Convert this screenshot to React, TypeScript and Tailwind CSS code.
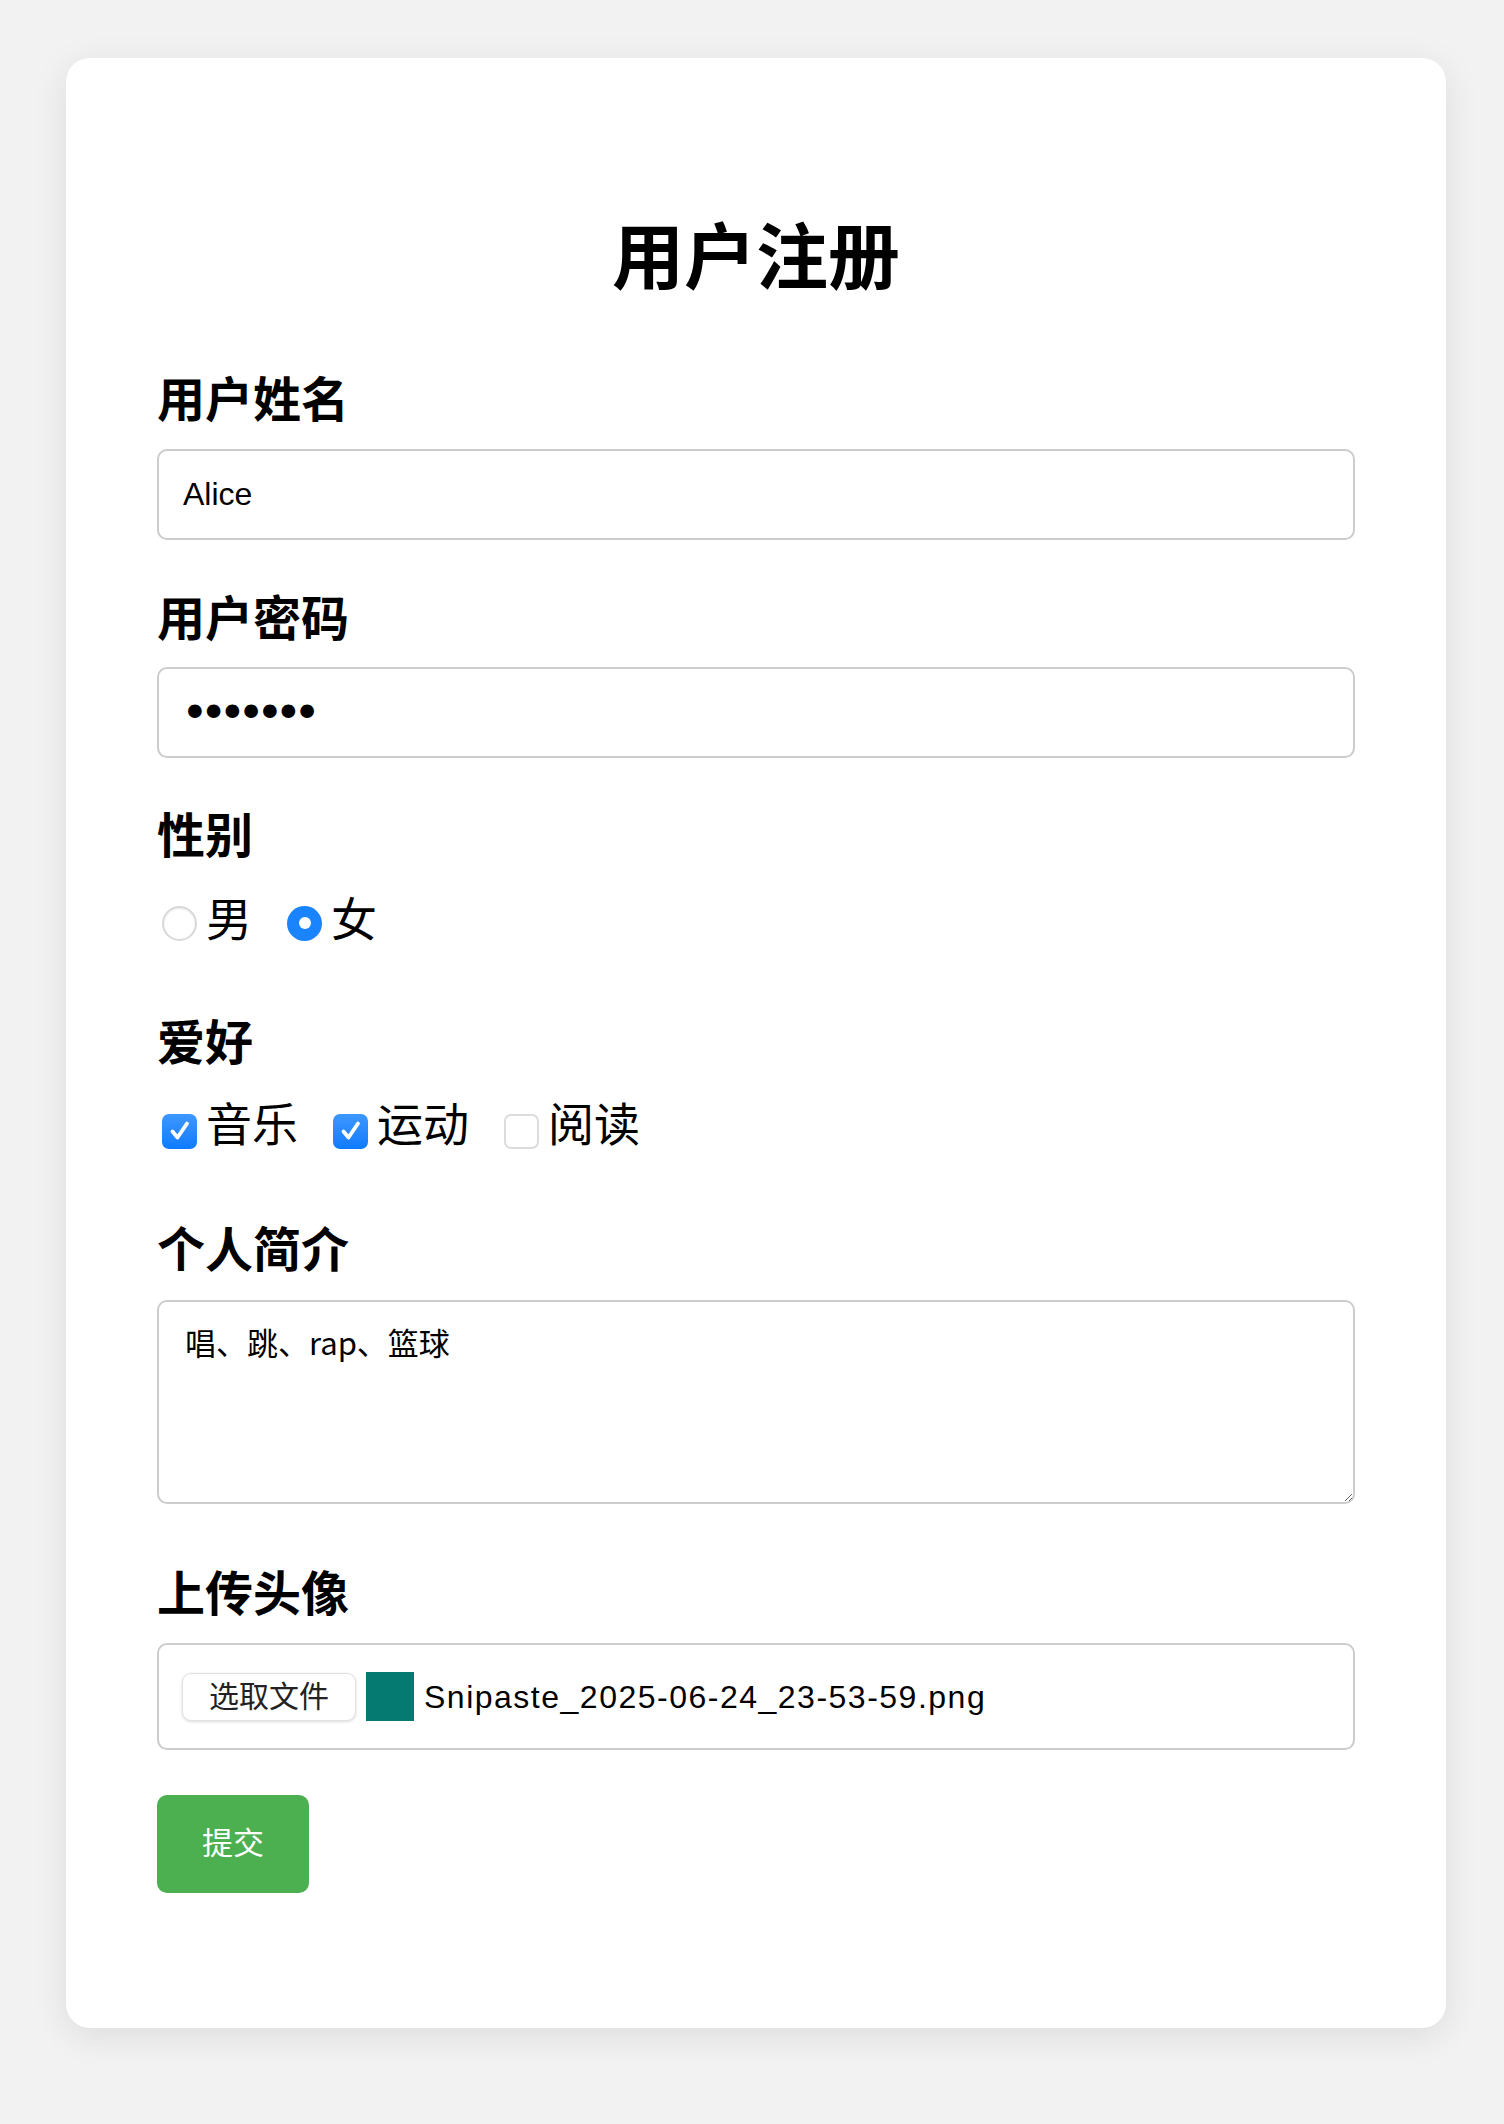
import { useState } from 'react';

const font = "font-['Liberation_Sans','Noto_Sans_CJK_SC',sans-serif]";

function Radio({ checked, label, onClick }: { checked: boolean; label: string; onClick: () => void }) {
  return (
    <label className="flex items-center cursor-pointer" onClick={onClick}>
      <span
        className={
          checked
            ? 'ml-[5px] mt-[6px] w-[35px] h-[35px] rounded-full bg-[#1a84ff] flex items-center justify-center'
            : 'ml-[5px] mt-[6px] w-[35px] h-[35px] rounded-full bg-white border-2 border-[#d9d9d9] shadow-[inset_0_1px_2px_rgba(0,0,0,0.08)]'
        }
      >
        {checked && <span className="w-[12px] h-[12px] rounded-full bg-white" />}
      </span>
      <span className="ml-[9px] text-[46px] leading-[56px] text-black">{label}</span>
    </label>
  );
}

function Check({ checked, label, onClick }: { checked: boolean; label: string; onClick: () => void }) {
  return (
    <label className="flex items-center cursor-pointer" onClick={onClick}>
      <span
        className={
          checked
            ? 'ml-[5px] mt-[12px] w-[35px] h-[35px] rounded-[7px] bg-gradient-to-b from-[#3d97ff] to-[#0a7bff] flex items-center justify-center'
            : 'ml-[5px] mt-[12px] w-[35px] h-[35px] rounded-[7px] bg-white border-2 border-[#dcdcdc]'
        }
      >
        {checked && (
          <svg width="24" height="24" viewBox="0 0 24 24" fill="none">
            <path d="M4.5 12.5 L9.5 18.5 L19 4.5" stroke="white" strokeWidth="3.8" strokeLinecap="round" strokeLinejoin="round" />
          </svg>
        )}
      </span>
      <span className="ml-[9px] text-[46px] leading-[56px] text-black">{label}</span>
    </label>
  );
}

export default function App() {
  const [gender, setGender] = useState('female');
  const [hobbies, setHobbies] = useState<string[]>(['music', 'sport']);

  const toggle = (h: string) =>
    setHobbies((prev) => (prev.includes(h) ? prev.filter((x) => x !== h) : [...prev, h]));

  return (
    <div className={`min-h-screen bg-[#f2f2f2] pt-[58px] pb-[60px] pl-[66px] pr-[58px] ${font}`}>
      <div className="bg-white rounded-[24px] shadow-[0_8px_36px_rgba(0,0,0,0.09)] px-[91px] pt-[160px] pb-[135px]">
        <h1 className="text-center text-[72px] leading-[80px] font-bold text-black">用户注册</h1>

        <div className="mt-[75px] text-[48px] leading-[56px] font-bold text-black">用户姓名</div>
        <input
          type="text"
          defaultValue="Alice"
          className="mt-[20px] block w-full h-[91px] border-2 border-[#cccccc] rounded-[10px] px-[24px] text-[32px] text-black outline-none"
        />

        <div className="mt-[52px] text-[48px] leading-[56px] font-bold text-black">用户密码</div>
        <input
          type="password"
          defaultValue="1234567"
          className="mt-[19px] block w-full h-[91px] border-2 border-[#cccccc] rounded-[10px] px-[22px] text-[47px] tracking-[-9px] font-['DejaVu_Sans',sans-serif] text-black outline-none"
        />

        <div className="mt-[51px] text-[48px] leading-[56px] font-bold text-black">性别</div>
        <div className="mt-[27px] flex items-center gap-[30px]">
          <Radio checked={gender === 'male'} label="男" onClick={() => setGender('male')} />
          <Radio checked={gender === 'female'} label="女" onClick={() => setGender('female')} />
        </div>

        <div className="mt-[68px] text-[48px] leading-[56px] font-bold text-black">爱好</div>
        <div className="mt-[25px] flex items-center gap-[30px]">
          <Check checked={hobbies.includes('music')} label="音乐" onClick={() => toggle('music')} />
          <Check checked={hobbies.includes('sport')} label="运动" onClick={() => toggle('sport')} />
          <Check checked={hobbies.includes('read')} label="阅读" onClick={() => toggle('read')} />
        </div>

        <div className="mt-[70px] text-[48px] leading-[56px] font-bold text-black">个人简介</div>
        <textarea
          defaultValue="唱、跳、rap、篮球"
          className="mt-[21px] block w-full h-[204px] border-2 border-[#cccccc] rounded-[10px] px-[26px] py-[20px] text-[31px] leading-[40px] text-black outline-none font-['Noto_Sans_CJK_SC',sans-serif]"
        />

        <div className="mt-[63px] text-[48px] leading-[56px] font-bold text-black">上传头像</div>
        <div className="mt-[20px] h-[107px] border-2 border-[#cccccc] rounded-[10px] flex items-center px-[23px]">
          <button className="h-[48px] px-[26px] bg-white rounded-[9px] border border-[#e2e2e2] shadow-[0_1px_3px_rgba(0,0,0,0.15)] text-[30px] leading-none text-[#222]">
            选取文件
          </button>
          <div className="ml-[10px] w-[48px] h-[49px] bg-[#047a70]" />
          <span className="ml-[10px] text-[32px] tracking-[1.5px] text-black">Snipaste_2025-06-24_23-53-59.png</span>
        </div>

        <button className="mt-[45px] w-[152px] h-[98px] rounded-[10px] bg-[#4caf50] text-white text-[31px]">提交</button>
      </div>
    </div>
  );
}
